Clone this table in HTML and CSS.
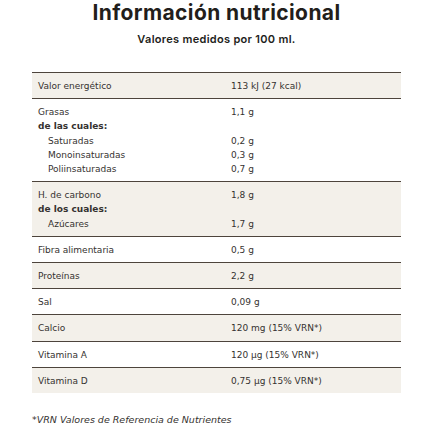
FILE: index.html
```html
<!DOCTYPE html>
<html lang="es">
<head>
<meta charset="UTF-8" />
<meta name="viewport" content="width=device-width, initial-scale=1" />
<title>Información nutricional</title>
<link rel="stylesheet" href="styles.css">
</head>
<body>

<h1 class="title">Información nutricional</h1>
<p class="subtitle">Valores medidos por 100 ml.</p>

<div class="facts">
  <div class="row shaded">
    <div class="name">Valor energético</div>
    <div class="value">113 kJ (27 kcal)</div>
  </div>
  <div class="row">
    <div class="name">
      <div>Grasas</div>
      <div class="sub">de las cuales:</div>
      <div class="indent">Saturadas</div>
      <div class="indent">Monoinsaturadas</div>
      <div class="indent">Poliinsaturadas</div>
    </div>
    <div class="value">
      <div>1,1 g</div>
      <div>&nbsp;</div>
      <div>0,2 g</div>
      <div>0,3 g</div>
      <div>0,7 g</div>
    </div>
  </div>
  <div class="row shaded">
    <div class="name">
      <div>H. de carbono</div>
      <div class="sub">de los cuales:</div>
      <div class="indent">Azúcares</div>
    </div>
    <div class="value">
      <div>1,8 g</div>
      <div>&nbsp;</div>
      <div>1,7 g</div>
    </div>
  </div>
  <div class="row">
    <div class="name">Fibra alimentaria</div>
    <div class="value">0,5 g</div>
  </div>
  <div class="row shaded">
    <div class="name">Proteínas</div>
    <div class="value">2,2 g</div>
  </div>
  <div class="row">
    <div class="name">Sal</div>
    <div class="value">0,09 g</div>
  </div>
  <div class="row shaded">
    <div class="name">Calcio</div>
    <div class="value">120 mg (15% VRN*)</div>
  </div>
  <div class="row">
    <div class="name">Vitamina A</div>
    <div class="value">120 µg (15% VRN*)</div>
  </div>
  <div class="row shaded last">
    <div class="name">Vitamina D</div>
    <div class="value">0,75 µg (15% VRN*)</div>
  </div>
</div>

<p class="note">*VRN Valores de Referencia de Nutrientes</p>

</body>
</html>
```

FILE: styles.css
```css
body {
  margin: 0;
  padding: 0 30px 0 32px;
  background-color: #fff;
  color: #353230;
  font-family: 'DejaVu Sans', Verdana, sans-serif;
}
.title {
  margin: 0;
  font-family: 'Inter', 'Open Sans', sans-serif;
  font-size: 21px;
  font-weight: 700;
  line-height: 25px;
  letter-spacing: 0.4px;
  text-align: center;
  color: #221e1b;
}
.subtitle {
  margin: 8px 0 0;
  font-family: 'Inter', 'Open Sans', sans-serif;
  font-size: 11px;
  font-weight: 600;
  line-height: 13px;
  letter-spacing: 0.3px;
  text-align: center;
  color: #221e1b;
}
.facts {
  margin-top: 26px;
  border-top: 1px solid #4d443c;
}
.row {
  display: flex;
  border-bottom: 1px solid #4d443c;
  padding: 6px 0 5px;
  font-size: 9px;
  line-height: 14.2px;
}
.row.shaded {
  background-color: #f3f0ea;
}
.row.last {
  border-bottom: none;
}
.name {
  width: 193px;
  padding-left: 6px;
  box-sizing: border-box;
}
.value {
  flex: 1;
  padding-left: 6px;
}
.sub {
  font-weight: bold;
}
.indent {
  padding-left: 10px;
}
.note {
  margin: 21px 0 0;
  font-size: 9.5px;
  font-style: italic;
  color: #353230;
}
```
